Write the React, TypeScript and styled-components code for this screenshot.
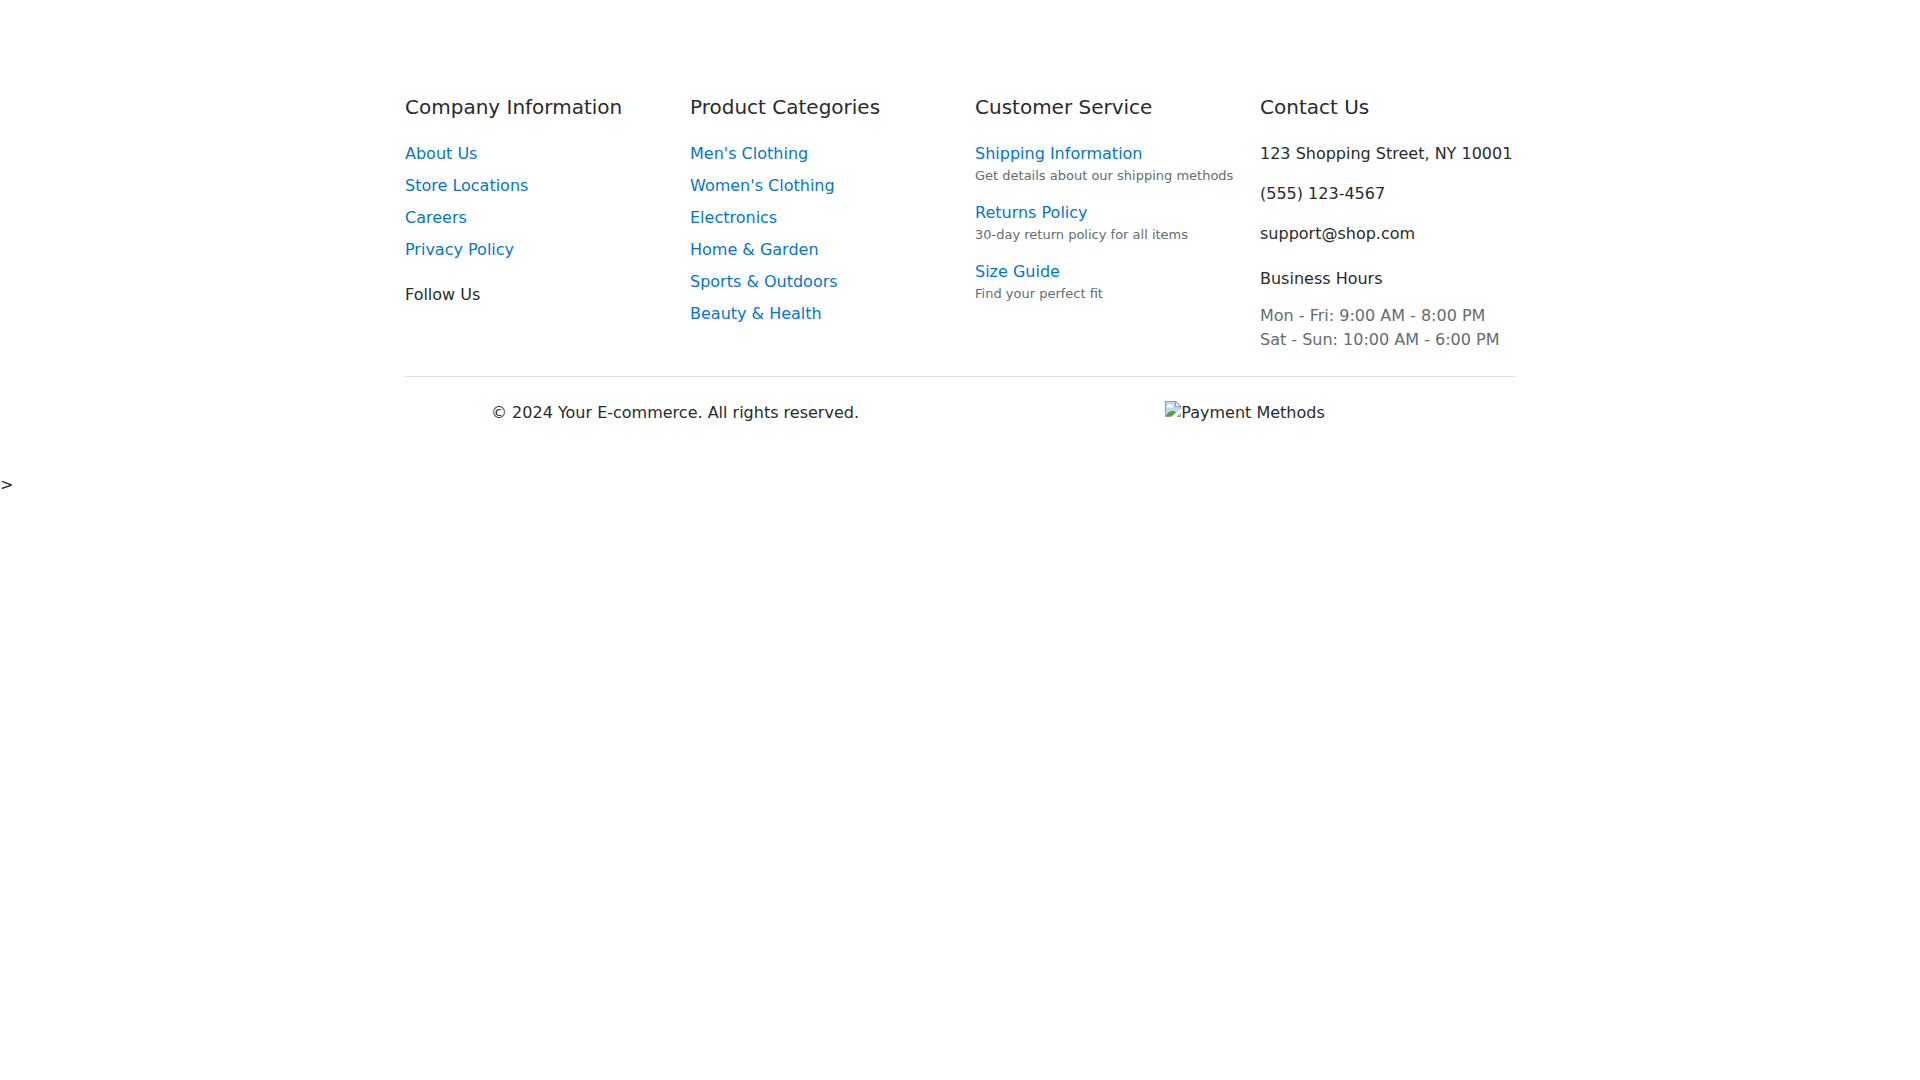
import React from "react";
import styled, { createGlobalStyle } from "styled-components";

const GlobalStyle = createGlobalStyle`
  *, *::before, *::after { box-sizing: border-box; }
  body {
    margin: 0;
    background: #fff;
    color: #292b2c;
    font-family: "DejaVu Sans", sans-serif;
    font-size: 16px;
    line-height: 24px;
  }
`;

const Footer = styled.footer`
  padding: 48px 0;
`;

const Container = styled.div`
  max-width: 1140px;
  margin: 0 auto;
  padding: 48px 15px 0;
`;

const Columns = styled.div`
  display: grid;
  grid-template-columns: repeat(4, minmax(0, 1fr));
  column-gap: 30px;
`;

const Title = styled.h5`
  margin: 0 0 24px;
  font-size: 20px;
  font-weight: 400;
  line-height: 22px;
`;

const Subtitle = styled.h6`
  margin: 24px 0 16px;
  font-size: 16px;
  font-weight: 400;
  line-height: 18px;
`;

const List = styled.ul`
  list-style: none;
  margin: 0;
  padding: 0;
`;

const Item = styled.li`
  margin-bottom: 8px;
`;

const Link = styled.a`
  color: #0275d8;
  text-decoration: none;

  &:hover {
    text-decoration: underline;
  }
`;

const Note = styled.p`
  margin: 0 0 16px;
  color: #636c72;
  font-size: 13px;
  line-height: 19px;
  white-space: nowrap;
`;

const Line = styled.p`
  margin: 0 0 16px;
`;

const Hours = styled.p`
  margin: 0;
  color: #636c72;
`;

const Bottom = styled.div`
  display: grid;
  grid-template-columns: repeat(2, minmax(0, 1fr));
  column-gap: 30px;
  margin-top: 24px;
  padding-top: 24px;
  border-top: 1px solid #e0e0e0;
  text-align: center;
`;

const Payment = styled.div`
  display: flex;
  justify-content: center;
`;

const Stray = styled.div``;

const company = ["About Us", "Store Locations", "Careers", "Privacy Policy"];
const categories = [
  "Men's Clothing",
  "Women's Clothing",
  "Electronics",
  "Home & Garden",
  "Sports & Outdoors",
  "Beauty & Health",
];
const services = [
  ["Shipping Information", "Get details about our shipping methods"],
  ["Returns Policy", "30-day return policy for all items"],
  ["Size Guide", "Find your perfect fit"],
];

function LinkList({ items }: { items: string[] }) {
  return (
    <List>
      {items.map((t) => (
        <Item key={t}>
          <Link href="#">{t}</Link>
        </Item>
      ))}
    </List>
  );
}

function MissingImageIcon() {
  return (
    <svg width="16" height="16" viewBox="0 0 16 16" aria-hidden="true">
      <path d="M0 0h11l5 5v11H0z" fill="#9a9a9a" />
      <path d="M1 1h9v5h5v9H1z" fill="#c3d5f6" />
      <path d="M2.500 6.500a1.300 1.300 0 0 1 .6-2.400 1.800 1.800 0 0 1 3.400-.2 1.400 1.400 0 0 1 1 2.600z" fill="#fff" />
      <path d="M1 15c1.500-3.200 3.500-5 6.500-5s5.500 2 7 5z" fill="#4ea72e" />
      <path d="M11 1.500V5h3.500z" fill="#fff" />
      <path d="M16 7.500v4L11.500 16H6z" fill="#fff" />
    </svg>
  );
}

export default function App() {
  return (
    <>
      <GlobalStyle />
      <Footer>
        <Container>
          <Columns>
            <section>
              <Title>Company Information</Title>
              <LinkList items={company} />
              <Subtitle>Follow Us</Subtitle>
            </section>
            <section>
              <Title>Product Categories</Title>
              <LinkList items={categories} />
            </section>
            <section>
              <Title>Customer Service</Title>
              {services.map(([t, n]) => (
                <div key={t}>
                  <Link href="#">{t}</Link>
                  <Note>{n}</Note>
                </div>
              ))}
            </section>
            <section>
              <Title>Contact Us</Title>
              <Line>123 Shopping Street, NY 10001</Line>
              <Line>(555) 123-4567</Line>
              <Line>support@shop.com</Line>
              <Subtitle>Business Hours</Subtitle>
              <Hours>
                Mon - Fri: 9:00 AM - 8:00 PM
                <br />
                Sat - Sun: 10:00 AM - 6:00 PM
              </Hours>
            </section>
          </Columns>
          <Bottom>
            <div>© 2024 Your E-commerce. All rights reserved.</div>
            <Payment>
              <MissingImageIcon />
              Payment Methods
            </Payment>
          </Bottom>
        </Container>
      </Footer>
      <Stray>&gt;</Stray>
    </>
  );
}
